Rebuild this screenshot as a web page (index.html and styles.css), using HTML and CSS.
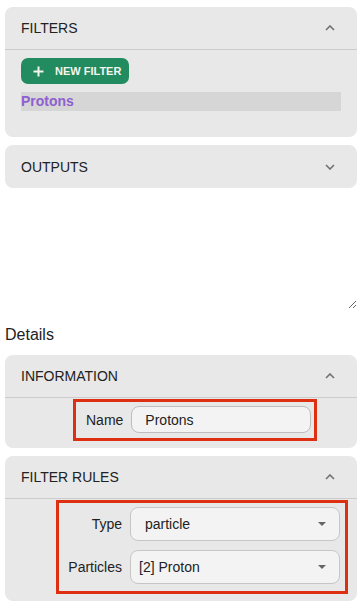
FILE: index.html
```html
<!DOCTYPE html>
<html lang="en">
<head>
  <title>Filters</title>
  <meta charset="utf-8"/>
  <link rel="stylesheet" href="styles.css">
</head>
<body>

  <div class="panel">
    <div class="panel-head">
      <span>FILTERS</span>
      <svg class="chevron" width="10" height="6" viewBox="0 0 10 6"><polyline points="1,5 5,1 9,5" /></svg>
    </div>
    <div class="panel-body filters-body">
      <button type="button" class="new-filter">
        <svg width="11" height="11" viewBox="0 0 11 11"><path d="M5.5 0.5v10M0.5 5.5h10" /></svg>
        <span>NEW FILTER</span>
      </button>
      <div class="filter-item">Protons</div>
    </div>
  </div>

  <div class="panel">
    <div class="panel-head closed">
      <span>OUTPUTS</span>
      <svg class="chevron" width="10" height="6" viewBox="0 0 10 6"><polyline points="1,1 5,5 9,1" /></svg>
    </div>
  </div>

  <textarea id="notes"></textarea>

  <div class="details-title">Details</div>

  <div class="panel">
    <div class="panel-head">
      <span>INFORMATION</span>
      <svg class="chevron" width="10" height="6" viewBox="0 0 10 6"><polyline points="1,5 5,1 9,5" /></svg>
    </div>
    <div class="panel-body">
      <div class="highlight info-box">
        <div class="field">
          <label for="name">Name</label>
          <input type="text" id="name" value="Protons">
        </div>
      </div>
    </div>
  </div>

  <div class="panel">
    <div class="panel-head">
      <span>FILTER RULES</span>
      <svg class="chevron" width="10" height="6" viewBox="0 0 10 6"><polyline points="1,5 5,1 9,5" /></svg>
    </div>
    <div class="panel-body">
      <div class="highlight rules-box">
        <div class="field">
          <label>Type</label>
          <div class="select"><span class="type-value">particle</span><span class="caret"></span></div>
        </div>
        <div class="field">
          <label>Particles</label>
          <div class="select"><span>[2] Proton</span><span class="caret"></span></div>
        </div>
      </div>
    </div>
  </div>

</body>
</html>
```

FILE: styles.css
```css
body {
  margin: 0;
  padding: 7px 4px 0 5px;
  font-family: "Liberation Sans", Arial, sans-serif;
  font-size: 14px;
  color: #222;
  background: #fff;
}

.panel {
  background: #e8e8e8;
  border-radius: 8px;
  margin-bottom: 8px;
}

.panel-head {
  height: 42px;
  padding: 0 22px 0 16px;
  display: flex;
  align-items: center;
  justify-content: space-between;
  border-bottom: 1px solid #cbcbcb;
}

.panel-head.closed {
  height: 43px;
  border-bottom: none;
}

.chevron {
  fill: none;
  stroke: #707070;
  stroke-width: 1.6;
}

.panel-body {
  padding: 1px 0 7px 0;
}

.filters-body {
  padding: 8px 16px 26px 16px;
}

.new-filter {
  display: flex;
  align-items: center;
  height: 26px;
  width: 108px;
  padding: 0 0 0 12px;
  border: none;
  border-radius: 7px;
  background: #228b5f;
  color: #f4f6ee;
  font-family: "Liberation Sans", Arial, sans-serif;
  font-size: 11px;
  font-weight: bold;
}

.new-filter svg {
  fill: none;
  stroke: #f4f6ee;
  stroke-width: 2;
  margin-right: 11px;
}

.filter-item {
  margin-top: 8px;
  height: 19px;
  line-height: 19px;
  background: #d6d6d6;
  color: #8e5fcf;
  font-weight: bold;
  font-size: 14px;
}

#notes {
  display: block;
  box-sizing: border-box;
  width: 100%;
  height: 113px;
  margin: 0;
  border: none;
  outline: none;
  background: #fff;
}

.details-title {
  font-size: 16px;
  line-height: 20px;
  margin: 16px 0 10px 0;
}

.highlight {
  border: 3px solid #dc3010;
  box-sizing: border-box;
}

.info-box {
  margin-left: 68px;
  width: 244px;
  padding: 4px 4px 5px 10px;
}

.rules-box {
  margin-left: 51px;
  width: 292px;
  padding: 4px 5px 7px 0;
  display: flex;
  flex-direction: column;
  gap: 9px;
}

.field {
  display: flex;
  align-items: center;
}

.info-box label {
  margin-right: 8px;
}

.rules-box label {
  width: 63px;
  text-align: right;
  margin-right: 8px;
}

#name {
  box-sizing: border-box;
  width: 180px;
  height: 27px;
  padding: 0 0 0 13px;
  border: 1px solid #bdbdbd;
  border-radius: 8px;
  background: #f3f3f3;
  font-family: "Liberation Sans", Arial, sans-serif;
  font-size: 14px;
  color: #222;
}

.select {
  box-sizing: border-box;
  flex: 1;
  height: 34px;
  padding: 0 13px 0 8px;
  display: flex;
  align-items: center;
  justify-content: space-between;
  border: 1px solid #c6c6c6;
  border-radius: 8px;
  background: #f3f3f3;
}

.type-value {
  padding-left: 6px;
}

.caret {
  width: 0;
  height: 0;
  border-left: 4px solid transparent;
  border-right: 4px solid transparent;
  border-top: 4px solid #666;
}
```
